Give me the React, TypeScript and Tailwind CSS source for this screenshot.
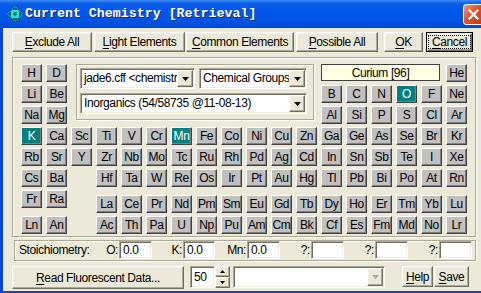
import React from "react";

type Cell = string | null;

const rows: Cell[][] = [
  ["H", "D", "He"],
  ["Li", "Be", "B", "C", "N", "O", "F", "Ne"],
  ["Na", "Mg", "Al", "Si", "P", "S", "Cl", "Ar"],
  ["K", "Ca", "Sc", "Ti", "V", "Cr", "Mn", "Fe", "Co", "Ni", "Cu", "Zn", "Ga", "Ge", "As", "Se", "Br", "Kr"],
  ["Rb", "Sr", "Y", "Zr", "Nb", "Mo", "Tc", "Ru", "Rh", "Pd", "Ag", "Cd", "In", "Sn", "Sb", "Te", "I", "Xe"],
  ["Cs", "Ba", null, "Hf", "Ta", "W", "Re", "Os", "Ir", "Pt", "Au", "Hg", "Tl", "Pb", "Bi", "Po", "At", "Rn"],
  ["Fr", "Ra", null, "La", "Ce", "Pr", "Nd", "Pm", "Sm", "Eu", "Gd", "Tb", "Dy", "Ho", "Er", "Tm", "Yb", "Lu"],
  ["Ln", "An", null, "Ac", "Th", "Pa", "U", "Np", "Pu", "Am", "Cm", "Bk", "Cf", "Es", "Fm", "Md", "No", "Lr"],
];

const selected = ["K", "Mn", "O"];

const raised =
  "bg-[#ECE9D8] border border-t-white border-l-white border-b-[#716F64] border-r-[#716F64] shadow-[inset_-1px_-1px_0_#ACA899,inset_1px_1px_0_#F1EFE2]";
const sunken =
  "bg-white border border-t-[#ACA899] border-l-[#ACA899] border-b-white border-r-white shadow-[inset_1px_1px_0_#716F64,inset_-1px_-1px_0_#F1EFE2]";
const etched = "border border-[#ACA899] shadow-[inset_1px_1px_0_#fff,1px_1px_0_#fff]";

const Arrow = ({ gray = false }: { gray?: boolean }) => (
  <svg width="7" height="4" viewBox="0 0 7 4">
    <path d="M0 0h7L3.5 4z" fill={gray ? "#ACA899" : "#000"} />
  </svg>
);

const AtomIcon = () => (
  <svg width="16" height="16" viewBox="0 0 16 16">
    <ellipse cx="8" cy="8" rx="7.2" ry="3.6" fill="none" stroke="#0B3F3F" strokeWidth="1.6" />
    <ellipse cx="8" cy="8" rx="3.6" ry="7.2" fill="none" stroke="#0B3F3F" strokeWidth="1.6" />
    <circle cx="8" cy="8" r="5" fill="#22D8D2" stroke="#0B3F3F" strokeWidth="1" />
    <ellipse cx="8" cy="8" rx="7.2" ry="3.6" fill="none" stroke="#38E8E0" strokeWidth="0.7" />
    <ellipse cx="8" cy="8" rx="3.6" ry="7.2" fill="none" stroke="#38E8E0" strokeWidth="0.7" />
    <circle cx="8" cy="8" r="1.8" fill="#0B6F6F" />
  </svg>
);

const Button = ({ w, children }: { w: string; children: React.ReactNode }) => (
  <div className={`${w} h-full flex items-center justify-center whitespace-nowrap ${raised}`}>{children}</div>
);

const U = ({ children }: { children: React.ReactNode }) => (
  <span className="underline underline-offset-[2px]">{children}</span>
);

const Combo = ({ w, text, extra = "" }: { w: string; text: string; extra?: string }) => (
  <div className={`${w} h-[21px] flex p-[1px] ${sunken} ${extra}`}>
    <span className="flex-1 overflow-hidden whitespace-nowrap pl-[2px] leading-[17px]">{text}</span>
    <div className={`w-[16px] h-[17px] shrink-0 flex items-center justify-center ${raised}`}>
      <Arrow />
    </div>
  </div>
);

const Element = ({ sym, shifted }: { sym: string; shifted: boolean }) => {
  const on = selected.includes(sym);
  return (
    <div
      className={`h-[18px] flex items-center justify-center leading-none border border-t-white border-l-white border-b-[#404040] border-r-[#404040] shadow-[inset_-1px_-1px_0_#808080] ${
        on ? "bg-[#008080] text-white" : "bg-[#C0C0C0] text-black"
      } ${shifted ? "mt-[5px]" : ""}`}
    >
      {sym}
    </div>
  );
};

const Field = ({ w, value = "" }: { w: string; value?: string }) => (
  <div className={`${w} h-[18px] shrink-0 pl-[3px] leading-[16px] ${sunken}`}>{value}</div>
);

export default function App() {
  return (
    <div className="w-[481px] h-[293px] overflow-hidden flex flex-col bg-[#0846D8] font-['Liberation_Sans',Arial,sans-serif] text-[12px] tracking-[-0.4px] text-black">
      {/* Title bar */}
      <div className="h-[28px] shrink-0 flex items-center pl-[7px] bg-[linear-gradient(180deg,#3A8CF8_0%,#0C5FE8_12%,#0058EE_35%,#0054E6_70%,#0049D6_100%)]">
        <AtomIcon />
        <span className="ml-[2px] font-['Liberation_Mono',monospace] font-bold text-[13.3px] tracking-normal text-white [text-shadow:1px_1px_0_#0A2A8A]">
          Current Chemistry [Retrieval]
        </span>
        <div className="ml-auto mr-[-3px] w-[21px] h-[21px] shrink-0 rounded-[3px] border border-white bg-[linear-gradient(135deg,#F39A77_0%,#E2502A_45%,#C8381A_100%)] flex items-center justify-center">
          <svg width="11" height="11" viewBox="0 0 11 11">
            <path d="M1.5 1.5l8 8M9.5 1.5l-8 8" stroke="#fff" strokeWidth="2.2" strokeLinecap="square" />
          </svg>
        </div>
      </div>

      {/* Dialog body */}
      <div className="flex-1 ml-[3px] mb-[2px] bg-[#ECE9D8] pl-[9px] pt-[4px] flex flex-col">
        {/* Top buttons */}
        <div className="flex h-[20px]">
          <Button w="w-[80px]">
            <U>E</U>xclude All
          </Button>
          <div className="ml-[2px] h-full">
            <Button w="w-[91px]">
              <U>L</U>ight Elements
            </Button>
          </div>
          <div className="ml-[1px] h-full">
            <Button w="w-[108px]">
              <U>C</U>ommon Elements
            </Button>
          </div>
          <div className="ml-[2px] h-full">
            <Button w="w-[82px]">
              <U>P</U>ossible All
            </Button>
          </div>
          <div className="ml-[6px] h-full">
            <Button w="w-[39px]">
              <U>O</U>K
            </Button>
          </div>
          <div className="ml-[3px] w-[47px] h-full border border-black">
            <div className={`w-full h-full flex items-center justify-center ${raised}`}>
              <span className="border border-dotted border-black px-[3px] leading-[12px]">
                <U>C</U>ancel
              </span>
            </div>
          </div>
        </div>

        {/* Periodic table frame */}
        <div className={`mt-[5px] w-[464px] h-[180px] pl-[8px] pt-[6px] ${etched}`}>
          <div className="grid grid-cols-[repeat(18,21px)] grid-rows-[repeat(7,18px)_23px] gap-x-[4px] gap-y-[3px]">
            <div className={`col-start-3 col-end-13 row-start-1 row-end-4 ml-[5px] mr-[3px] mb-[4px] pl-[3px] pt-[3px] ${etched}`}>
              <div className="flex gap-[4px]">
                <Combo w="w-[115px]" text="jade6.cff <chemistry>" />
                <Combo w="w-[108px]" text="Chemical Groups" />
              </div>
              <Combo w="w-[227px]" extra="mt-[4px]" text="Inorganics (54/58735 @11-08-13)" />
            </div>
            <div className="col-start-13 col-end-18 row-start-1 mr-[2px] h-[17px] bg-[#FFFFE1] border border-[#404040] flex items-center justify-center leading-none">
              Curium [96]
            </div>
            {rows.map((row, r) =>
              row.map((sym, c) =>
                sym ? (
                  <Element key={`${r}-${c}`} sym={sym} shifted={r === 7 || (r === 6 && c > 2)} />
                ) : (
                  <div key={`${r}-${c}`} />
                )
              )
            )}
          </div>
        </div>

        {/* Stoichiometry */}
        <div className={`mt-[3px] ml-[2px] w-[462px] h-[21px] flex items-start ${etched}`}>
          <div className="w-[104px] h-[18px] flex items-center justify-between pl-[4px] pr-[1px]">
            <span>Stoichiometry:</span>
            <span>O:</span>
          </div>
          <Field w="w-[33px]" value="0.0" />
          <div className="w-[31px] h-[18px] flex items-center justify-end pr-[1px]">K:</div>
          <Field w="w-[32px]" value="0.0" />
          <div className="w-[32px] h-[18px] flex items-center justify-end pr-[1px]">Mn:</div>
          <Field w="w-[33px]" value="0.0" />
          <div className="w-[31px] h-[18px] flex items-center justify-end pr-[1px]">?:</div>
          <Field w="w-[33px]" />
          <div className="w-[31px] h-[18px] flex items-center justify-end pr-[1px]">?:</div>
          <Field w="w-[33px]" />
          <div className="w-[31px] h-[18px] flex items-center justify-end pr-[1px]">?:</div>
          <Field w="w-[33px]" />
        </div>

        {/* Bottom row */}
        <div className="mt-[5px] flex items-start">
          <div className="h-[23px]">
            <Button w="w-[172px]">
              <U>R</U>ead Fluorescent Data...
            </Button>
          </div>
          <div className={`ml-[6px] w-[25px] h-[22px] pl-[3px] leading-[20px] ${sunken}`}>50</div>
          <div className="w-[15px] h-[22px] flex flex-col">
            <div className={`h-[11px] flex items-center justify-center ${raised}`}>
              <svg width="5" height="3" viewBox="0 0 5 3">
                <path d="M2.5 0L5 3H0z" fill="#000" />
              </svg>
            </div>
            <div className={`h-[11px] flex items-center justify-center ${raised}`}>
              <svg width="5" height="3" viewBox="0 0 5 3">
                <path d="M0 0h5L2.5 3z" fill="#000" />
              </svg>
            </div>
          </div>
          <div className={`ml-[3px] w-[152px] h-[22px] flex justify-end p-[1px] ${sunken}`}>
            <div className={`w-[16px] h-[18px] flex items-center justify-center ${raised}`}>
              <Arrow gray />
            </div>
          </div>
          <div className="ml-[17px] h-[21px]">
            <Button w="w-[31px]">
              <U>H</U>elp
            </Button>
          </div>
          <div className="ml-[1px] h-[21px]">
            <Button w="w-[35px]">
              <U>S</U>ave
            </Button>
          </div>
        </div>
      </div>
    </div>
  );
}
